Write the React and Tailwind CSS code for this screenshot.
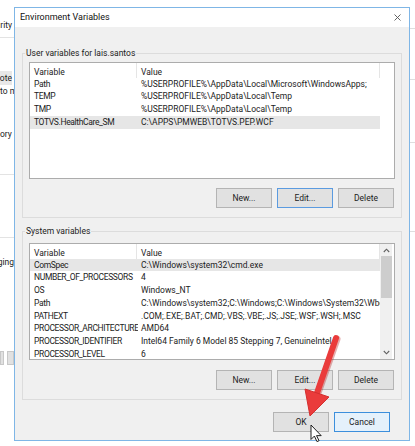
import clsx from "clsx";

const userVars = [
  ["Path", "%USERPROFILE%\\AppData\\Local\\Microsoft\\WindowsApps;"],
  ["TEMP", "%USERPROFILE%\\AppData\\Local\\Temp"],
  ["TMP", "%USERPROFILE%\\AppData\\Local\\Temp"],
  ["TOTVS.HealthCare_SM", "C:\\APPS\\PMWEB\\TOTVS.PEP.WCF"],
];

const systemVars = [
  ["ComSpec", "C:\\Windows\\system32\\cmd.exe"],
  ["NUMBER_OF_PROCESSORS", "4"],
  ["OS", "Windows_NT"],
  ["Path", "C:\\Windows\\system32;C:\\Windows;C:\\Windows\\System32\\Wbe..."],
  ["PATHEXT", ".COM;.EXE;.BAT;.CMD;.VBS;.VBE;.JS;.JSE;.WSF;.WSH;.MSC"],
  ["PROCESSOR_ARCHITECTURE", "AMD64"],
  ["PROCESSOR_IDENTIFIER", "Intel64 Family 6 Model 85 Stepping 7, GenuineIntel"],
  ["PROCESSOR_LEVEL", "6"],
];

function Btn({ children, focused, primary }) {
  return (
    <button
      className={clsx(
        "flex h-[20px] w-[56px] items-center justify-center border text-[8.5px] text-[#1b1b1b]",
        primary
          ? "border-[#3c8fdc] bg-[#e5f1fb]"
          : focused
          ? "border-[#5b9be0] bg-[#e1e1e1]"
          : "border-[#b4b4b4] bg-[#e1e1e1]"
      )}
    >
      {children}
    </button>
  );
}

function Scrollbar() {
  return (
    <div className="flex w-[12px] shrink-0 flex-col items-center bg-[#f0f0f0]">
      <svg className="mt-[4px] mb-[3px]" width="7" height="5" viewBox="0 0 7 5">
        <path d="M0.8 4 L3.5 1.2 L6.2 4" fill="none" stroke="#606060" strokeWidth="1.1" />
      </svg>
      <div className="h-[42px] w-[11px] bg-[#cdcdcd]" />
      <div className="flex-1" />
      <svg className="mb-[4px]" width="7" height="5" viewBox="0 0 7 5">
        <path d="M0.8 1 L3.5 3.8 L6.2 1" fill="none" stroke="#606060" strokeWidth="1.1" />
      </svg>
    </div>
  );
}

function VarTable({ rows, selected, scroll }) {
  return (
    <div className="flex h-[117px] overflow-hidden border border-[#acacac] bg-white">
      <div className="flex w-[350px] shrink-0 flex-col">
        <div className="flex h-[14.5px] shrink-0 items-center">
          <div className="h-full w-[107px] border-r border-[#e5e5e5] pl-[4px] pt-[3px]">Variable</div>
          <div className="h-full flex-1 border-r border-[#e5e5e5] pl-[4px] pt-[3px]">Value</div>
        </div>
        {rows.map(([name, value], i) => (
          <div
            key={name + i}
            className={clsx("flex h-[12.75px] shrink-0 items-center", i === selected && "bg-[#e6e6e6]")}
          >
            <div className="w-[108px] shrink-0 overflow-hidden whitespace-nowrap pl-[4px] tracking-[-0.35px]">
              {name}
            </div>
            <div className="flex-1 overflow-hidden whitespace-nowrap pl-[3px]">{value}</div>
          </div>
        ))}
      </div>
      {scroll ? <Scrollbar /> : <div className="flex-1" />}
    </div>
  );
}

// group box: caption sits on the top edge of the frame
function Group({ title, children, className }) {
  return (
    <div className={clsx("mx-[7px] flex flex-col", className)}>
      <div className="flex h-[12px] items-end">
        <div className="h-[6px] w-[3px] border-l border-t border-[#dcdcdc]" />
        <span className="self-center px-[1px] leading-[12px] text-[#1b1b1b]">{title}</span>
        <div className="h-[6px] flex-1 border-r border-t border-[#dcdcdc]" />
      </div>
      <div className="border-x border-b border-[#dcdcdc] px-[6px] pb-[9px]">{children}</div>
    </div>
  );
}

function BehindWindow() {
  // edge of the System Properties window peeking out on the left
  return (
    <div className="flex w-[14px] shrink-0 flex-col overflow-hidden text-[8.5px] leading-none text-[#222]">
      <div className="h-[19px]" />
      <div className="flex h-[12px] items-center justify-end pr-[2px] whitespace-nowrap">rity</div>
      <div className="mt-[6px] h-px bg-[#e3e3e3]" />
      <div className="h-[33px]" />
      <div className="flex h-[14px] w-[12px] items-center justify-end bg-[#e8e8e8] whitespace-nowrap">ote</div>
      <div className="flex h-[13px] items-center whitespace-nowrap">to m</div>
      <div className="h-[30px]" />
      <div className="flex h-[12px] items-center whitespace-nowrap">ory u</div>
      <div className="h-[34px]" />
      <div className="h-px bg-[#e3e3e3]" />
      <div className="h-[62px]" />
      <div className="h-px bg-[#e3e3e3]" />
      <div className="h-[18px]" />
      <div className="flex h-[12px] items-center justify-end whitespace-nowrap">ging</div>
      <div className="h-[83px]" />
      <div className="flex h-[14px] gap-[3px]">
        <div className="w-[4px] border border-[#c8c8c8] bg-[#e1e1e1]" />
        <div className="w-[7px] border border-[#c8c8c8] bg-[#e1e1e1]" />
      </div>
    </div>
  );
}

function RightEdge() {
  return (
    <div className="flex flex-1 flex-col">
      <div className="h-[28px]" />
      <div className="h-px bg-[#dedede]" />
      <div className="h-[50px]" />
      <div className="h-px bg-[#dedede]" />
      <div className="h-[62px]" />
      <div className="h-px bg-[#dedede]" />
      <div className="h-[88px]" />
      <div className="h-px bg-[#dedede]" />
    </div>
  );
}

function Overlay() {
  return (
    <svg className="pointer-events-none absolute inset-0" width="415" height="446" viewBox="0 0 415 446">
      {/* red callout arrow */}
      <line x1="337" y1="339" x2="318" y2="393" stroke="#b71c1c" strokeWidth="7" strokeLinecap="round" opacity="0.35" />
      <line x1="336" y1="338" x2="317" y2="393" stroke="#ea3b3b" strokeWidth="6" strokeLinecap="round" />
      <polygon points="310,416 305,389 329,397" fill="#ea3b3b" stroke="#d42f2f" strokeWidth="1" strokeLinejoin="round" />
      {/* mouse pointer */}
      <g transform="translate(311 425) scale(0.85)">
        <path d="M0 0 L0 17 L4 13 L7 19.5 L9.5 18.5 L6.5 12.5 L12 12.5 Z" fill="#fff" stroke="#111" strokeWidth="1.1" strokeLinejoin="round" />
      </g>
    </svg>
  );
}

export default function App() {
  return (
    <div
      className="relative flex h-[446px] w-[415px] overflow-hidden bg-white text-[8.5px] text-[#1b1b1b]"
      style={{ fontFamily: 'Roboto, "Noto Sans", sans-serif' }}
    >
      <BehindWindow />
      <div className="mt-[7px] flex h-[434px] w-[396px] shrink-0 flex-col border border-[#7fb6e6] bg-[#f0f0f0]">
        <div className="flex h-[19px] shrink-0 items-center justify-between bg-white pl-[5px] pr-[8px]">
          <span className="text-[9px] text-[#111]">Environment Variables</span>
          <svg width="7" height="7" viewBox="0 0 7 7">
            <path d="M0.5 0.5 L6.5 6.5 M6.5 0.5 L0.5 6.5" stroke="#555" strokeWidth="0.9" />
          </svg>
        </div>

        <Group title="User variables for lais.santos" className="mt-[20px]">
          <div className="mt-[3px]">
            <VarTable rows={userVars} selected={3} />
          </div>
          <div className="mt-[9px] flex justify-end gap-[5px] pr-px">
            <Btn>New...</Btn>
            <Btn focused>Edit...</Btn>
            <Btn>Delete</Btn>
          </div>
        </Group>

        <Group title="System variables" className="mt-[7px]">
          <div className="mt-[6px]">
            <VarTable rows={systemVars} selected={0} scroll />
          </div>
          <div className="mt-[10px] flex justify-end gap-[5px] pr-px">
            <Btn>New...</Btn>
            <Btn>Edit...</Btn>
            <Btn>Delete</Btn>
          </div>
        </Group>

        <div className="mt-[12px] flex justify-end gap-[5px] pr-[19px]">
          <Btn>OK</Btn>
          <Btn primary>Cancel</Btn>
        </div>
      </div>
      <RightEdge />
      <Overlay />
    </div>
  );
}
